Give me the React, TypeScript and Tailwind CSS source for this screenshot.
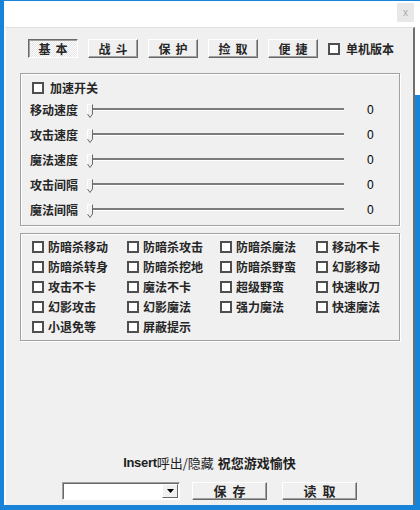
import clsx from "clsx";

const sliders = ["移动速度", "攻击速度", "魔法速度", "攻击间隔", "魔法间隔"];

const options = [
  ["防暗杀移动", "防暗杀攻击", "防暗杀魔法", "移动不卡"],
  ["防暗杀转身", "防暗杀挖地", "防暗杀野蛮", "幻影移动"],
  ["攻击不卡", "魔法不卡", "超级野蛮", "快速收刀"],
  ["幻影攻击", "幻影魔法", "强力魔法", "快速魔法"],
  ["小退免等", "屏蔽提示"],
];

const Box = () => (
  <span className="block w-[12px] h-[12px] shrink-0 border-2 border-[#4f4f4f] bg-white" />
);

const Spaced = ({ text, gap }: { text: string; gap: string }) => (
  <span className={clsx("flex items-center", gap)}>
    {text.split("").map((c, i) => (
      <span key={i}>{c}</span>
    ))}
  </span>
);

const Tab = ({ label, active }: { label: string; active?: boolean }) => (
  <div
    className={clsx(
      "w-[50px] h-[19px] flex items-center justify-center text-[12px] font-bold text-[#262626] border",
      active
        ? "border-t-[#696969] border-l-[#696969] border-r-white border-b-white shadow-[inset_1px_1px_0_#a0a0a0] bg-[repeating-conic-gradient(#ffffff_0_25%,#e4e4e4_0_50%)] bg-[length:2px_2px]"
        : "border-t-white border-l-white border-r-[#696969] border-b-[#696969] shadow-[inset_-1px_-1px_0_#a0a0a0]"
    )}
  >
    <Spaced text={label} gap="gap-[5px]" />
  </div>
);

const Thumb = () => (
  <svg width="6" height="14" viewBox="0 0 6 14" className="absolute left-[1px] top-[7px]">
    <polygon points="0.5,0.5 5.5,0.5 5.5,10 3,13.5 0.5,10" fill="#f0f0f0" />
    <path d="M0.5 10 V0.5 H5" stroke="#ffffff" fill="none" />
    <path d="M5.5 0.5 V10 L3 13.5 L0.5 10" stroke="#6a6a6a" fill="none" />
  </svg>
);

const SliderRow = ({ label }: { label: string }) => (
  <div className="h-[25px] flex items-center pl-[9px]">
    <span className="w-[56px] text-[12px] font-bold text-[#262626]">{label}</span>
    <div className="relative w-[258px] h-[25px]">
      <div className="absolute left-[6px] right-0 top-[11px] h-[2px] bg-[#7c7c7c] shadow-[0_1px_0_#ffffff]" />
      <Thumb />
    </div>
    <span className="ml-[23px] text-[12px] text-black font-['Liberation_Sans',Arial,sans-serif]">0</span>
  </div>
);

const RaisedButton = ({ label }: { label: string }) => (
  <div className="w-[75px] h-[18px] flex items-center justify-center text-[13px] font-bold text-[#262626] border border-t-white border-l-white border-r-[#696969] border-b-[#696969] shadow-[inset_-1px_-1px_0_#a0a0a0]">
    <Spaced text={label} gap="gap-[6px]" />
  </div>
);

export default function App() {
  return (
    <div className="w-[420px] h-[510px] bg-[#1783d9] pt-[1px] overflow-hidden font-['Noto_Sans_CJK_SC','Noto_Sans',sans-serif]">
      <div className="ml-[4px] w-[416px] h-[504px] flex flex-col bg-white">
        {/* title bar */}
        <div className="h-[26px] flex justify-end pr-[6px] pt-[2px]">
          <div className="w-[17px] h-[19px] bg-[#e8e8e8] flex items-center justify-center text-[10px] leading-none text-[#a8a8a8] font-['Liberation_Sans',sans-serif]">
            x
          </div>
        </div>
        <div className="flex-1 flex">
          {/* client area */}
          <div className="w-[411px] h-full bg-[#f0f0f0] border-l-2 border-l-[#fbfbfb] border-r-2 border-r-[#6f6f6f] border-t border-t-[#e2e2e2] flex flex-col">
            {/* tabs */}
            <div className="mt-[11px] pl-[22px] flex items-center gap-[10px]">
              <Tab label="基本" active />
              <Tab label="战斗" />
              <Tab label="保护" />
              <Tab label="捡取" />
              <Tab label="便捷" />
              <div className="flex items-center gap-[6px]">
                <Box />
                <span className="text-[12px] font-bold text-[#262626]">单机版本</span>
              </div>
            </div>

            {/* speed group */}
            <div className="mt-[15px] ml-[14px] w-[380px] h-[153px] border border-[#a0a0a0] shadow-[inset_1px_1px_0_#ffffff,1px_1px_0_#ffffff] pt-[8px]">
              <div className="h-[12px] flex items-center gap-[6px] pl-[11px]">
                <Box />
                <span className="text-[12px] font-bold text-[#262626]">加速开关</span>
              </div>
              <div className="mt-[3px]">
                {sliders.map((s) => (
                  <SliderRow key={s} label={s} />
                ))}
              </div>
            </div>

            {/* options group */}
            <div className="mt-[7px] ml-[14px] w-[380px] h-[108px] border border-[#a0a0a0] shadow-[inset_1px_1px_0_#ffffff,1px_1px_0_#ffffff] pt-[3px] pl-[11px]">
              <div className="grid grid-cols-[95px_93px_96px_1fr]">
                {options.flat().map((o) => (
                  <div key={o} className="h-[20px] flex items-center gap-[4px]">
                    <Box />
                    <span className="text-[12px] font-bold text-[#262626] whitespace-nowrap">{o}</span>
                  </div>
                ))}
              </div>
            </div>

            {/* hint */}
            <div className="mt-[114px] h-[16px] flex items-center justify-center text-[13px] text-[#1e1e1e]">
              <span className="font-bold font-['Liberation_Sans',Arial,sans-serif] tracking-[-0.3px]">Insert</span>
              <span>呼出/隐藏</span>
              <span className="ml-[4px] font-bold">祝您游戏愉快</span>
            </div>

            {/* bottom controls */}
            <div className="mt-[11px] pl-[56px] flex items-center">
              <div className="w-[118px] h-[18px] bg-white border border-t-[#a0a0a0] border-l-[#a0a0a0] border-r-white border-b-white shadow-[inset_1px_1px_0_#696969] flex justify-end items-center pr-[1px]">
                <div className="w-[16px] h-[14px] bg-[#f0f0f0] border border-t-white border-l-white border-r-[#696969] border-b-[#696969] flex items-center justify-center">
                  <svg width="7" height="4" viewBox="0 0 7 4">
                    <polygon points="0,0 7,0 3.5,4" fill="#000" />
                  </svg>
                </div>
              </div>
              <div className="ml-[12px]">
                <RaisedButton label="保存" />
              </div>
              <div className="ml-[15px]">
                <RaisedButton label="读取" />
              </div>
            </div>
          </div>
          {/* desktop strip at right */}
          <div className="w-[5px] flex flex-col">
            <div className="h-[68px] bg-white" />
            <div className="flex-1 bg-[#1783d9]" />
          </div>
        </div>
      </div>
    </div>
  );
}
